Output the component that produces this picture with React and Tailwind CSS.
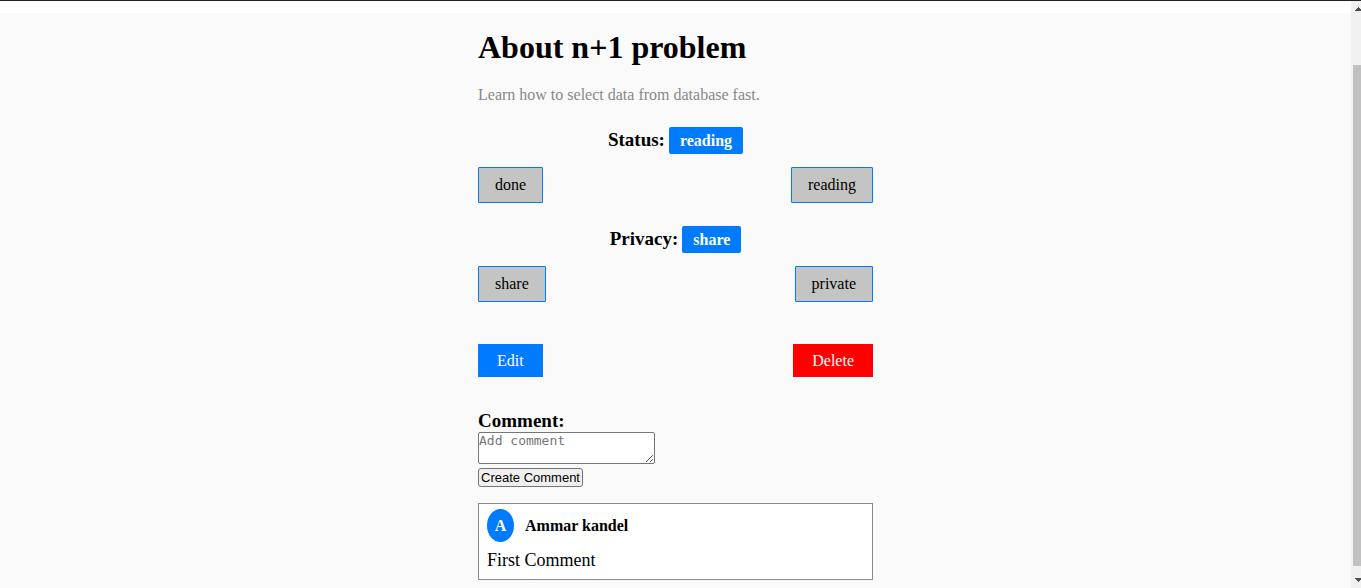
import React from "react";

function Choice({ title, value, options }) {
  return (
    <section className="flex flex-col gap-[13px]">
      <h2 className="flex items-start justify-center gap-1 text-[19px] leading-[25px] font-bold">
        {title}:
        <span className="rounded-[2px] bg-[#007bff] px-[11px] text-base leading-[27px] text-white">
          {value}
        </span>
      </h2>
      <div className="flex justify-between">
        {options.map((option) => (
          <button
            key={option}
            type="button"
            className="h-9 rounded-[1px] border border-[#007bff] bg-[#c4c4c4] px-4 text-base leading-5"
          >
            {option}
          </button>
        ))}
      </div>
    </section>
  );
}

function Scrollbar() {
  return (
    <div aria-hidden="true" className="flex w-[10px] shrink-0 flex-col items-end bg-[#f1f1f1]">
      <svg className="h-16 w-2" viewBox="0 0 8 64" shapeRendering="crispEdges">
        <path d="M5 6h1v1h1v1h1v2H2V9h1V8h1V7h1z" fill="#505050" />
      </svg>
      <div className="w-2 grow bg-[#c1c1c1]" />
      <svg className="h-[22px] w-2" viewBox="0 0 8 22" shapeRendering="crispEdges">
        <path d="M2 12h6v2H7v1H6v1H5v-1H4v-1H3v-1H2z" fill="#505050" />
      </svg>
    </div>
  );
}

export default function App() {
  return (
    <div className="flex min-h-screen border-t border-[#202124] bg-[#fafafa] font-['Liberation_Serif',serif] text-black">
      <div className="grow">
        <div className="h-3 bg-white" />
        <main className="mx-auto w-full max-w-[395px] pt-4 pb-2">
          <h1 className="text-[32px] leading-9 font-bold">About n+1 problem</h1>
          <p className="mt-5 text-base leading-5 text-[#888888]">
            Learn how to select data from database fast.
          </p>
          <div className="mt-[22px] flex flex-col gap-[23px]">
            <Choice title="Status" value="reading" options={["done", "reading"]} />
            <Choice title="Privacy" value="share" options={["share", "private"]} />
          </div>
          <div className="mt-[42px] flex justify-between text-base leading-[33px] text-white">
            <button type="button" className="bg-[#007bff] px-[19px]">Edit</button>
            <button type="button" className="bg-[#ff0000] px-[19px]">Delete</button>
          </div>
          <form className="mt-[33px] flex flex-col items-start" onSubmit={(e) => e.preventDefault()}>
            <label htmlFor="comment" className="text-[19px] leading-[22px] font-bold">
              Comment:
            </label>
            <textarea
              id="comment"
              placeholder="Add comment"
              className="h-8 w-[177px] rounded-[2px] border border-[#767676] bg-white font-['DejaVu_Sans_Mono',monospace] text-[13px] leading-[15px] placeholder:text-[#757575]"
            />
            <button
              type="submit"
              className="mt-1 h-[19px] rounded-[3px] border border-[#767676] bg-[#efefef] px-[2px] font-['Liberation_Sans',sans-serif] text-[13px] leading-[17px]"
            >
              Create Comment
            </button>
          </form>
          <article className="mt-4 border border-[#888888] bg-white px-2 pt-[5px] pb-2">
            <header className="flex items-center gap-[11px] text-base font-bold">
              <span className="w-[27px] rounded-[50%] bg-[#007bff] text-center leading-[33px] text-white">A</span>
              <span>Ammar kandel</span>
            </header>
            <p className="mt-2 text-[18px] leading-[21px]">First Comment</p>
          </article>
        </main>
      </div>
      <Scrollbar />
    </div>
  );
}
